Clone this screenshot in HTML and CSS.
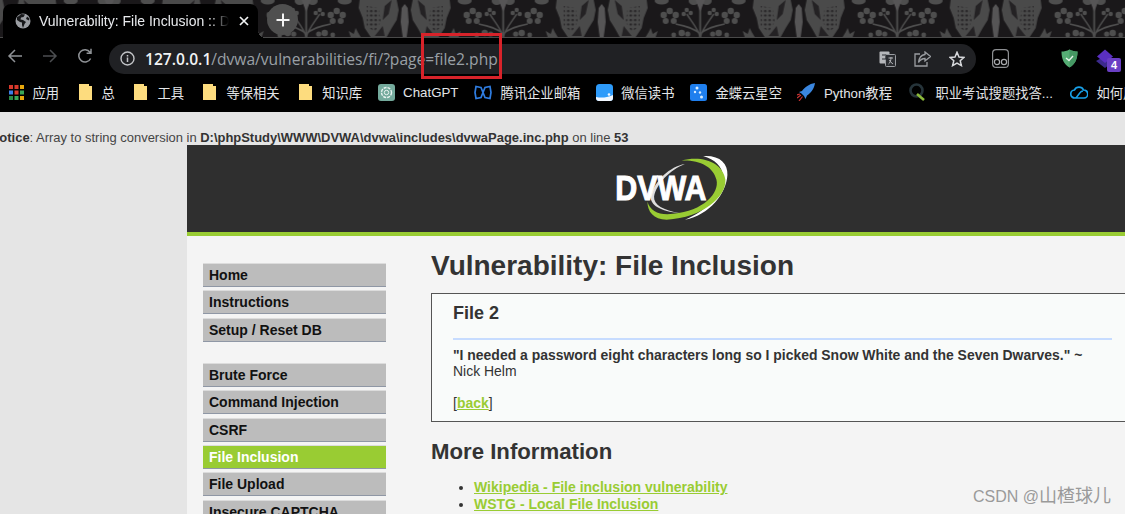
FILE: index.html
```html
<!DOCTYPE html>
<html lang="zh-CN">
<head>
    <meta charset="UTF-8">
    <title>Vulnerability: File Inclusion :: DVWA</title>
    <link rel="stylesheet" href="styles.css">
</head>
<body>
    <div class="chrome">
        <div class="tabstrip">
            <svg class="damask" width="1125" height="38">
                <defs>
                    <pattern id="lace" width="4.5" height="4.5" patternUnits="userSpaceOnUse">
                        <circle cx="2" cy="2" r="1.2" fill="#242224"/>
                    </pattern>
                    <g id="half">
                        <path d="M8 0 H45 L46 8 L42 18 L40 28 L34 37 H18 L13 28 L8 20 L6 10 Z" fill="#4a4a4a"/>
                        <path d="M26 8 L38 6 L38 26 L30 32 L24 22 Z" fill="url(#lace)"/>
                        <path d="M13 0 L20 6 L22 20 L16 14 Z M22 26 L30 36 L20 36 Z" fill="#242224"/>
                        <path d="M0 4 L3 8 L4 22 L2 37 H0 Z" fill="#565556"/>
                        <path d="M44 37 L47 32 L49 28 L51 34 L56 31 L54 37 Z" fill="#4a4a4a"/>
                        <g fill="#4e4e4e">
                            <circle cx="68" cy="11" r="3.2"/><circle cx="62" cy="15" r="3.2"/><circle cx="74" cy="15" r="3.2"/><circle cx="64" cy="21" r="3"/><circle cx="72" cy="21" r="3"/>
                            <circle cx="85" cy="10" r="2.2"/><circle cx="89" cy="13" r="2.2"/><circle cx="82" cy="14" r="2.2"/>
                            <circle cx="80" cy="33" r="3.2"/><circle cx="86" cy="34" r="2.6"/><circle cx="72" cy="35" r="2.4"/>
                            <ellipse cx="60" cy="1" rx="7" ry="3.5"/><ellipse cx="92" cy="1" rx="5" ry="4"/>
                        </g>
                        <path d="M98.5 37 C96 28 90 22 85 14 M98.5 34 C92 28 84 26 74 24" fill="none" stroke="#4e4e4e" stroke-width="1.5"/>
                    </g>
                    <pattern id="tile" width="197" height="38" patternUnits="userSpaceOnUse" patternTransform="translate(10.7 0)">
                        <use href="#half"/>
                        <use href="#half" transform="translate(197 0) scale(-1 1)"/>
                        <path d="M98.5 37 V4" stroke="#4e4e4e" stroke-width="1.8"/>
                        <path d="M94 0 L98.5 12 L103 0 Z" fill="#565556"/>
                    </pattern>
                </defs>
                <rect width="1125" height="38" fill="#1a181a"/>
                <rect width="1125" height="37" fill="url(#tile)"/>
                <rect y="37" width="1125" height="1" fill="#4a4a4a"/>
            </svg>
            <div class="tab">
                <svg class="tab-globe" width="16" height="16" viewBox="0 0 16 16">
                    <circle cx="8" cy="8" r="7.5" fill="#9b9ea3"/>
                    <path d="M6 1 L4 3 L2 4 L2 7 L5 9 L7 9.5 L7 12 L8 15 L9.5 11 L11 9 L8 7 L5.5 6.5 L6 4.5 L8.5 4 L10 1.5 Z M12 3.5 L11 6 L14 7.5 L14.5 5.5 Z" fill="#17181a"/>
                </svg>
                <span class="tab-title">Vulnerability: File Inclusion :: DVWA</span>
                <svg class="tab-close" width="10" height="10" viewBox="0 0 10 10">
                    <path d="M1 1 L9 9 M9 1 L1 9" stroke="#f1f3f4" stroke-width="1.7"/>
                </svg>
            </div>
            <div class="newtab">
                <svg width="14" height="14" viewBox="0 0 14 14">
                    <path d="M7 0.5 V13.5 M0.5 7 H13.5" stroke="#f4f4f4" stroke-width="2"/>
                </svg>
            </div>
        </div>
        <div class="toolbar">
            <div class="navbtns">
                <svg width="16" height="16" viewBox="0 0 16 16"><path d="M15 8 H2 M8 2 L2 8 L8 14" fill="none" stroke="#8f9296" stroke-width="1.5"/></svg>
                <svg width="16" height="16" viewBox="0 0 16 16"><path d="M1 8 H14 M8 2 L14 8 L8 14" fill="none" stroke="#4c4e51" stroke-width="1.5"/></svg>
                <svg width="16" height="16" viewBox="0 0 16 16"><path d="M13.6 10.5 A6.2 6.2 0 1 1 13 4.2 M14 0.8 V5.2 H9.6" fill="none" stroke="#8f9296" stroke-width="1.5"/></svg>
            </div>
            <div class="omnibox">
                <svg width="15" height="15" viewBox="0 0 15 15"><circle cx="7.5" cy="7.5" r="6.5" fill="none" stroke="#c2c4c7" stroke-width="1.4"/><path d="M7.5 6.5 V11 M7.5 4 V5.5" stroke="#c2c4c7" stroke-width="1.5"/></svg>
                <div class="url"><b>127.0.0.1</b>/dvwa/vulnerabilities/fi/?page=file2.php</div>
                <div class="omni-actions">
                    <svg width="17" height="16" viewBox="0 0 17 16"><rect x="0.5" y="0.5" width="10" height="12" rx="1" fill="#b5b7ba"/><rect x="6.5" y="3.5" width="10" height="12" rx="1" fill="#2b2d31" stroke="#9a9da1"/><path d="M3 4 H7 M3 8 H7 V5" fill="none" stroke="#2b2d31" stroke-width="1.2"/><path d="M9.5 7 H14 M12 6 C12 10 11 12 9.5 13 M10.5 9 C11 11 13 12 14 13" fill="none" stroke="#b5b7ba"/></svg>
                    <svg width="17" height="16" viewBox="0 0 17 16"><path d="M6 3 H1 V15 H13 V11" fill="none" stroke="#9a9da1" stroke-width="1.3"/><path d="M11 1 L16.5 5.5 L11 10 V7.5 C8 7.5 6 9 4.5 11.5 C5 7 7.5 4 11 3.5 Z" fill="none" stroke="#9a9da1" stroke-width="1.3"/></svg>
                    <svg width="16" height="16" viewBox="0 0 16 16"><path d="M8 1.3 L10 6 L15 6.4 L11.2 9.7 L12.4 14.6 L8 12 L3.6 14.6 L4.8 9.7 L1 6.4 L6 6 Z" fill="none" stroke="#d7d9dc" stroke-width="1.5"/></svg>
                </div>
            </div>
            <div class="extensions">
                <svg class="ext-reader" width="17" height="19" viewBox="0 0 17 19"><rect x="0.6" y="0.6" width="15.8" height="17.8" rx="3.5" fill="none" stroke="#8d8f92" stroke-width="1.2"/><circle cx="5" cy="13" r="2.6" fill="none" stroke="#a9abae" stroke-width="1.2"/><circle cx="12" cy="13" r="2.6" fill="none" stroke="#a9abae" stroke-width="1.2"/></svg>
                <svg class="ext-shield" width="17" height="19" viewBox="0 0 17 19"><path d="M8.5 0.5 C11 2 14 2.5 16.5 2.5 C16.5 10 14 15.5 8.5 18.5 C3 15.5 0.5 10 0.5 2.5 C3 2.5 6 2 8.5 0.5 Z" fill="#55ad74"/><path d="M8.5 0.5 C11 2 14 2.5 16.5 2.5 C16.5 10 14 15.5 8.5 18.5 Z" fill="#459863"/><path d="M5 9 L8 11.5 L12 7" fill="none" stroke="#e6f4ea" stroke-width="1.4"/></svg>
                <div class="ext-stack">
                    <svg width="18" height="20" viewBox="0 0 18 20"><path d="M0 12 L9 7 L18 12 L9 19 Z" fill="#3b2a8c"/><path d="M1 7.5 L9 0.5 L17 7.5 L9 14 Z" fill="#5a2fc2"/></svg>
                    <span class="ext-badge">4</span>
                </div>
            </div>
        </div>
        <div class="bookmarks">
            <div class="bm">
                <svg width="15" height="15" viewBox="0 0 15 15">
                    <rect width="4" height="4" fill="#d8392c"/><rect x="5.5" width="4" height="4" fill="#d8392c"/><rect x="11" width="4" height="4" fill="#e8a80c"/>
                    <rect y="5.5" width="4" height="4" fill="#3d7ee6"/><rect x="5.5" y="5.5" width="4" height="4" fill="#d8392c"/><rect x="11" y="5.5" width="4" height="4" fill="#3aa757"/>
                    <rect y="11" width="4" height="4" fill="#2c8a46"/><rect x="5.5" y="11" width="4" height="4" fill="#3aa757"/><rect x="11" y="11" width="4" height="4" fill="#e8a80c"/>
                </svg>
                <span>应用</span>
            </div>
            <div class="bm bm-folder"><svg width="13" height="16" viewBox="0 0 13 16"><path d="M0 0 H10 V2 H13 V16 H0 Z" fill="#fddc7e"/></svg><span>总</span></div>
            <div class="bm bm-folder"><svg width="13" height="16" viewBox="0 0 13 16"><path d="M0 0 H10 V2 H13 V16 H0 Z" fill="#fddc7e"/></svg><span>工具</span></div>
            <div class="bm bm-folder"><svg width="13" height="16" viewBox="0 0 13 16"><path d="M0 0 H10 V2 H13 V16 H0 Z" fill="#fddc7e"/></svg><span>等保相关</span></div>
            <div class="bm bm-folder"><svg width="13" height="16" viewBox="0 0 13 16"><path d="M0 0 H10 V2 H13 V16 H0 Z" fill="#fddc7e"/></svg><span>知识库</span></div>
            <div class="bm">
                <svg width="17" height="17" viewBox="0 0 17 17"><rect width="17" height="17" rx="3" fill="#74aa9c"/><circle cx="8.5" cy="8.5" r="5" fill="none" stroke="#eaf4f1" stroke-width="1.4" stroke-dasharray="3 1"/><circle cx="8.5" cy="8.5" r="2.2" fill="none" stroke="#eaf4f1"/></svg>
                <span>ChatGPT</span>
            </div>
            <div class="bm">
                <svg width="18" height="15" viewBox="0 0 18 15"><path d="M7 2.5 L2 1.5 L1 7.5 L2 13.5 L7 12.5 L11 2.5 L16 1.5 L17 7.5 L16 13.5 L11 12.5 Z" fill="none" stroke="#2f7de1" stroke-width="1.7"/></svg>
                <span>腾讯企业邮箱</span>
            </div>
            <div class="bm">
                <svg width="17" height="17" viewBox="0 0 17 17"><rect width="17" height="17" rx="3.5" fill="#2e9bfa"/><path d="M0 13 C5 14 10 14 17 11 V14 A3 3 0 0 1 14 17 H3 A3 3 0 0 1 0 14 Z" fill="#f2f8ff"/><circle cx="13" cy="10.5" r="1.3" fill="#f2f8ff"/></svg>
                <span>微信读书</span>
            </div>
            <div class="bm">
                <svg width="17" height="17" viewBox="0 0 17 17"><rect width="17" height="17" rx="2.5" fill="#1f7fee"/><circle cx="7" cy="4" r="1.5" fill="#d8ecff"/><circle cx="5" cy="8" r="1.2" fill="#d8ecff"/><circle cx="10" cy="8.5" r="1.2" fill="#d8ecff"/><circle cx="11.5" cy="13" r="1.5" fill="#d8ecff"/></svg>
                <span>金蝶云星空</span>
            </div>
            <div class="bm">
                <svg width="18" height="18" viewBox="0 0 18 18"><path d="M18 0 C12 1 8 4 5 8 L2 9 L4.5 10.5 L7 13 L8.5 16 L10 12.5 C14 10 17 6 18 0 Z" fill="#3a86df"/><path d="M4 12 L0 15 M5.5 13.5 L2 18 M3 11 L0 12" stroke="#c93333" stroke-width="1.2"/></svg>
                <span>Python教程</span>
            </div>
            <div class="bm bm-wide">
                <svg width="18" height="18" viewBox="0 0 18 18"><circle cx="7.5" cy="7.5" r="6" fill="none" stroke="#26343a" stroke-width="2.6"/><path d="M8 11 L15 17" stroke="#8dbb3c" stroke-width="2.6"/></svg>
                <span>职业考试搜题找答...</span>
            </div>
            <div class="bm bm-wide">
                <svg width="18" height="14" viewBox="0 0 18 14"><path d="M5 13 A4 4 0 0 1 4.5 5 A5 5 0 0 1 13.5 5 A4 4 0 0 1 14 13 Z M5 13 C8 13 9 6 13 6" fill="none" stroke="#18a0e8" stroke-width="1.7"/></svg>
                <span>如何用</span>
            </div>
        </div>
    </div>

    <div class="page">
        <div class="notice"><b>Notice</b>: Array to string conversion in <b>D:\phpStudy\WWW\DVWA\dvwa\includes\dvwaPage.inc.php</b> on line <b>53</b></div>
        <div class="dvwa">
            <div class="header">
                <svg class="logo" width="120" height="73" viewBox="150 30 360 220">
                    <path d="M430 48 C480 45 505 70 503 105 C500 160 450 225 375 240 C440 215 490 160 490 110 C488 80 465 58 430 48 Z" fill="#fff"/>
                    <path d="M375 72 C330 80 285 120 272 170 C270 195 300 215 360 220 C310 212 280 195 282 170 C290 130 330 90 375 72 Z" fill="#ddd"/>
                    <path d="M365 62 C430 45 490 70 497 120 C500 170 430 235 320 240 C280 240 262 215 262 185 C270 215 300 228 340 222 C430 215 480 160 470 120 C460 80 420 60 365 62 Z" fill="#9c3"/>
                    <text class="logo-text" x="165" y="180" textLength="275" lengthAdjust="spacingAndGlyphs">DVWA</text>
                </svg>
            </div>
            <div class="main">
                <div class="menu">
                    <div class="menu-group">
                        <div class="menu-item">Home</div>
                        <div class="menu-item">Instructions</div>
                        <div class="menu-item">Setup / Reset DB</div>
                    </div>
                    <div class="menu-group">
                        <div class="menu-item">Brute Force</div>
                        <div class="menu-item">Command Injection</div>
                        <div class="menu-item">CSRF</div>
                        <div class="menu-item selected">File Inclusion</div>
                        <div class="menu-item">File Upload</div>
                        <div class="menu-item">Insecure CAPTCHA</div>
                    </div>
                </div>
                <div class="content">
                    <h1>Vulnerability: File Inclusion</h1>
                    <div class="vulnerable_code_area">
                        <h3>File 2</h3>
                        <hr>
                        <p><b>"I needed a password eight characters long so I picked Snow White and the Seven Dwarves." ~</b><br>Nick Helm</p>
                        <p class="back">[<a href="#">back</a>]</p>
                    </div>
                    <h2>More Information</h2>
                    <ul>
                        <li><a href="#">Wikipedia - File inclusion vulnerability</a></li>
                        <li><a href="#">WSTG - Local File Inclusion</a></li>
                        <li><a href="#">WSTG - Remote File Inclusion</a></li>
                    </ul>
                </div>
            </div>
        </div>
    </div>

    <div class="redbox"></div>
    <div class="watermark">CSDN @<span class="watermark-name">山楂球儿</span></div>
</body>
</html>
```

FILE: styles.css
```css
:root {
    --dvwa-green: #99cc33;
    --bar-text: #e3e5e8;
}
* {
    box-sizing: border-box;
    margin: 0;
    padding: 0;
}
html, body {
    height: 514px;
    overflow: hidden;
}
body {
    position: relative;
    font-family: "Liberation Sans", Arial, sans-serif;
    background: #e5e5e5;
    color: #333;
}
svg {
    display: block;
    flex: none;
}

/* browser bar */
.chrome {
    height: 112px;
    background: #000;
}
.tabstrip {
    position: relative;
    height: 38px;
    display: flex;
    align-items: flex-end;
    padding-left: 3px;
}
.damask {
    position: absolute;
    left: 0;
    top: 0;
}
.tab {
    position: relative;
    width: 255px;
    height: 34px;
    background: #000;
    border-radius: 8px 8px 0 0;
    display: flex;
    align-items: center;
    padding-left: 12px;
}
.tab::after {
    content: "";
    position: absolute;
    left: 100%;
    bottom: 0;
    width: 8px;
    height: 8px;
    background: radial-gradient(circle at 100% 0, transparent 8px, #000 8px);
}
.tab-title {
    width: 190px;
    margin-left: 8px;
    overflow: hidden;
    white-space: nowrap;
    font-size: 14px;
    color: #e8eaed;
    -webkit-mask-image: linear-gradient(to right, #000 90%, transparent);
}
.tab-close {
    margin-left: 10px;
}
.newtab {
    position: relative;
    width: 31px;
    height: 31px;
    margin: 0 0 3px 9px;
    border-radius: 50%;
    background: #4f4f4f;
    display: flex;
    align-items: center;
    justify-content: center;
}
.toolbar {
    height: 36px;
    display: flex;
    align-items: center;
}
.navbtns {
    width: 109px;
    display: flex;
    gap: 19px;
    padding-left: 7px;
}
.omnibox {
    width: 867px;
    height: 30px;
    margin-top: 5px;
    background: #202124;
    border-radius: 15px;
    display: flex;
    align-items: center;
    padding: 0 11px;
}
.url {
    margin-left: 10px;
    font-family: "Open Sans", sans-serif;
    font-size: 15.6px;
    color: #9aa0a6;
    white-space: nowrap;
}
.url b {
    font-weight: 600;
    color: #f1f3f4;
}
.omni-actions {
    margin-left: auto;
    display: flex;
    align-items: center;
    gap: 18px;
}
.extensions {
    display: flex;
    align-items: center;
    margin-top: 5px;
}
.ext-reader {
    margin-left: 16px;
}
.ext-shield {
    margin-left: 52px;
}
.ext-stack {
    position: relative;
    margin-left: 18px;
}
.ext-badge {
    position: absolute;
    left: 11px;
    top: 9px;
    width: 14px;
    height: 14px;
    border-radius: 2px;
    background: #6a3fc4;
    color: #fff;
    font-size: 11px;
    font-weight: bold;
    line-height: 14px;
    text-align: center;
}
.bookmarks {
    height: 38px;
    display: flex;
    align-items: center;
    gap: 15.5px;
    padding: 0 0 2px 9px;
    white-space: nowrap;
    overflow: hidden;
    font-family: "Liberation Sans", "Noto Sans CJK SC", sans-serif;
    font-size: 13.3px;
    color: var(--bar-text);
}
.bm {
    display: flex;
    align-items: center;
    gap: 8.5px;
}
.bm-folder {
    margin-left: 4px;
    gap: 10px;
}
.bm-wide {
    margin-left: 1.5px;
}

/* dvwa page */
.page {
    height: 402px;
    overflow: hidden;
    font-size: 12.96px;
}
.notice {
    height: 33px;
    margin-left: -10px;
    padding-top: 18px;
    line-height: 15px;
    white-space: nowrap;
    color: #444;
}
.notice b {
    color: #333;
}
.dvwa {
    margin-left: 187px;
    background: #f4f4f4;
}
.header {
    height: 91px;
    background: #2f2f2f;
    border-bottom: 4px solid var(--dvwa-green);
    display: flex;
    padding-top: 5px;
    padding-left: 423px;
}
.logo-text {
    font-family: "Liberation Sans", sans-serif;
    font-weight: bold;
    font-size: 104px;
    fill: #fff;
    stroke: #fff;
    stroke-width: 3px;
}
.main {
    display: flex;
    padding-top: 27px;
}
.menu {
    width: 183px;
    margin-left: 16px;
    flex: none;
}
.menu-group {
    margin-bottom: 21.5px;
}
.menu-item {
    height: 24px;
    margin-bottom: 3.3px;
    padding-left: 6px;
    background: #bcbcbc;
    border-top: 1px solid #dcdcdc;
    border-bottom: 1px solid #8f97a5;
    font-size: 14px;
    font-weight: bold;
    line-height: 22px;
    color: #111;
}
.menu-item.selected {
    background: var(--dvwa-green);
    color: #fff;
}
.content {
    flex: 1;
    margin-left: 45px;
    margin-top: -15px;
}
h1 {
    font-size: 28px;
    line-height: 34px;
    margin-top: 1px;
}
.vulnerable_code_area {
    width: 700px;
    height: 129px;
    margin-top: 10px;
    padding: 9px 0 0 21px;
    background: #f9fbfa;
    border: 1px solid #555;
    font-size: 13.95px;
    line-height: 15.5px;
}
h3 {
    font-size: 18px;
    line-height: 20px;
}
hr {
    width: 659px;
    height: 2px;
    margin: 15px 0 8px;
    border: 0;
    background: #c7dcff;
}
.back {
    margin-top: 17px;
}
a {
    color: var(--dvwa-green);
    font-weight: bold;
}
h2 {
    margin-top: 17px;
    font-size: 22.2px;
    line-height: 26px;
}
ul {
    margin-top: 14px;
    padding-left: 43px;
    font-size: 14px;
    line-height: 16.5px;
}

/* things drawn over the shot */
.redbox {
    position: absolute;
    left: 421px;
    top: 33px;
    width: 81px;
    height: 46px;
    border: 3px solid #d8232a;
}
.watermark {
    position: absolute;
    left: 973px;
    top: 486px;
    font-family: "Liberation Sans", "Noto Sans CJK SC", sans-serif;
    font-size: 16px;
    line-height: 20px;
    color: #9a9a9a;
    white-space: nowrap;
}
.watermark-name {
    font-size: 18px;
}
```
